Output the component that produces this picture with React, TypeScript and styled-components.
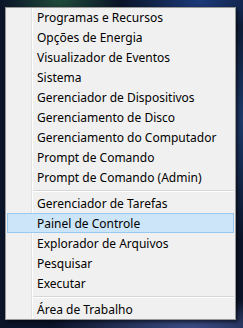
import React from 'react';
import styled, { createGlobalStyle } from 'styled-components';

const GlobalStyle = createGlobalStyle`
  html, body {
    margin: 0;
    padding: 0;
  }
  body {
    width: 243px;
    height: 328px;
    overflow: hidden;
    background:
      radial-gradient(ellipse 60px 40px at 60px 0px, #1f4a3a 0%, transparent 100%),
      radial-gradient(ellipse 80px 30px at 200px 2px, #1b3a7a 0%, transparent 100%),
      radial-gradient(ellipse 40px 120px at 243px 120px, #1d3a6a 0%, transparent 100%),
      radial-gradient(ellipse 140px 30px at 190px 328px, #3c4c84 0%, transparent 100%),
      #0b1428;
    font-family: "Noto Sans", "Open Sans", sans-serif;
  }
`;

const Desktop = styled.div`
  padding: 7px 0 0 5px;
`;

const Menu = styled.div`
  width: 229px;
  height: 311px;
  border: 1px solid #979797;
  background: #f0f0f0;
  box-shadow: 2px 2px 3px rgba(0, 0, 0, 0.5);
  position: relative;
  display: flex;
  flex-direction: column;
  &::before {
    content: '';
    position: absolute;
    top: 0;
    bottom: 0;
    left: 25px;
    width: 1px;
    background: #e2e2e2;
    box-shadow: 1px 0 0 #ffffff;
  }
`;

const Item = styled.div<{ $active?: boolean }>`
  position: relative;
  height: 18px;
  margin: 0 1px;
  padding-left: 29px;
  display: flex;
  align-items: center;
  font-size: 12px;
  color: #000;
  white-space: nowrap;
  border: 1px solid ${(p) => (p.$active ? '#99c9ee' : 'transparent')};
  background: ${(p) => (p.$active ? '#cde5f8' : 'transparent')};
  z-index: 1;
`;

const Separator = styled.div`
  height: 6px;
  margin-left: 26px;
  margin-right: 1px;
  display: flex;
  align-items: center;
  &::after {
    content: '';
    flex: 1;
    height: 1px;
    background: #d7d7d7;
    box-shadow: 0 1px 0 #ffffff;
  }
`;

type Entry = { label: string; active?: boolean } | 'sep';

const entries: Entry[] = [
  { label: 'Programas e Recursos' },
  { label: 'Opções de Energia' },
  { label: 'Visualizador de Eventos' },
  { label: 'Sistema' },
  { label: 'Gerenciador de Dispositivos' },
  { label: 'Gerenciamento de Disco' },
  { label: 'Gerenciamento do Computador' },
  { label: 'Prompt de Comando' },
  { label: 'Prompt de Comando (Admin)' },
  'sep',
  { label: 'Gerenciador de Tarefas' },
  { label: 'Painel de Controle', active: true },
  { label: 'Explorador de Arquivos' },
  { label: 'Pesquisar' },
  { label: 'Executar' },
  'sep',
  { label: 'Área de Trabalho' },
];

const App = () => {
  return (
    <>
      <GlobalStyle />
      <Desktop>
        <Menu>
          {entries.map((e, i) =>
            e === 'sep' ? (
              <Separator key={i} />
            ) : (
              <Item key={i} $active={e.active}>
                {e.label}
              </Item>
            )
          )}
        </Menu>
      </Desktop>
    </>
  );
};

export default App;
